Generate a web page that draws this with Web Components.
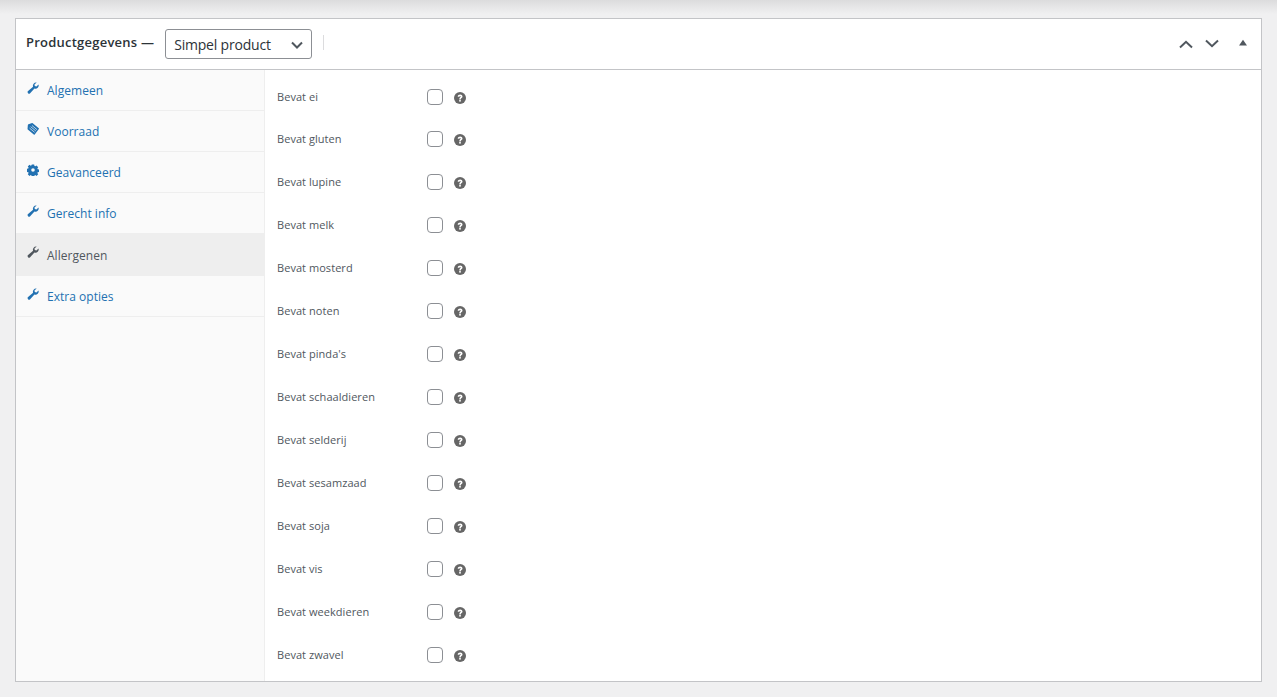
<!DOCTYPE html>
<html>
<head>
<meta charset="utf-8">
<title>Productgegevens</title>
<style>
html, body { margin: 0; height: 100%; }
body {
    background: #f0f0f1;
    font-family: "Open Sans", "Noto Sans", sans-serif;
    color: #3c434a;
    overflow: hidden;
}
</style>
</head>
<body>
<page-frame>
    <product-box title-text="Productgegevens —">
        <product-tab slot="tabs" icon="wrench">Algemeen</product-tab>
        <product-tab slot="tabs" icon="tag">Voorraad</product-tab>
        <product-tab slot="tabs" icon="gear">Geavanceerd</product-tab>
        <product-tab slot="tabs" icon="wrench">Gerecht info</product-tab>
        <product-tab slot="tabs" icon="wrench" active>Allergenen</product-tab>
        <product-tab slot="tabs" icon="wrench">Extra opties</product-tab>
        <check-row>Bevat ei</check-row>
        <check-row>Bevat gluten</check-row>
        <check-row>Bevat lupine</check-row>
        <check-row>Bevat melk</check-row>
        <check-row>Bevat mosterd</check-row>
        <check-row>Bevat noten</check-row>
        <check-row>Bevat pinda's</check-row>
        <check-row>Bevat schaaldieren</check-row>
        <check-row>Bevat selderij</check-row>
        <check-row>Bevat sesamzaad</check-row>
        <check-row>Bevat soja</check-row>
        <check-row>Bevat vis</check-row>
        <check-row>Bevat weekdieren</check-row>
        <check-row>Bevat zwavel</check-row>
    </product-box>
</page-frame>
<script>
const ICONS = {
    wrench: '<path d="M11.300.7a3.700 3.700 0 0 0-4.200 4.900L.9 10.800a1.900 1.900 0 0 0 2.500 2.600l5.300-5.900a3.700 3.700 0 0 0 4.700-4.700L11 5.200 9.100 4.700 8.700 3z"/>',
    tag: '<path d="M6.700.3 13.700 6a.8.8 0 0 1 .1 1.100L9 13.300a.8.8 0 0 1-1.100.1L.9 7.600a.8.8 0 0 1-.3-.7L1 2.200a.8.8 0 0 1 .7-.7L6 .1a.8.8 0 0 1 .7.2z"/><path d="M4.300 4.300 10.300 9.300M5.800 2.900 11.700 7.800M3 6 8.900 10.900" stroke="#fafafa" stroke-width=".8" fill="none"/>',
    gear: '<path fill-rule="evenodd" d="M5.600.6h2.800l.3 1.700 1 .4 1.400-1 2 2-1 1.400.4 1 1.700.3v2.800l-1.700.3-.4 1 1 1.400-2 2-1.400-1-1 .4-.3 1.700H5.600l-.3-1.700-1-.4-1.400 1-2-2 1-1.400-.4-1-1.700-.3V5.600l1.700-.3.4-1-1-1.400 2-2 1.400 1 1-.4zM7 4.900a2.100 2.100 0 1 0 0 4.200 2.100 2.100 0 0 0 0-4.200z"/>'
};

class PageFrame extends HTMLElement {
    constructor() {
        super();
        const root = this.attachShadow({mode: 'open'});
        root.innerHTML = `
        <style>
            :host {
                display: block;
                padding: 18px 15px 15px;
                background: linear-gradient(#dcdcdd, #f0f0f1 14px) no-repeat;
                box-sizing: border-box;
                height: 100%;
            }
        </style>
        <slot></slot>`;
    }
}

class ProductBox extends HTMLElement {
    constructor() {
        super();
        const root = this.attachShadow({mode: 'open'});
        root.innerHTML = `
        <style>
            :host {
                display: block;
                width: 1247px;
                height: 664px;
                box-sizing: border-box;
                background: #fff;
                border: 1px solid #c3c4c7;
            }
            header {
                display: flex;
                align-items: center;
                height: 51px;
                box-sizing: border-box;
                border-bottom: 1px solid #c3c4c7;
                padding-left: 10px;
            }
            h2 {
                margin: -4px 0 0;
                font-size: 13px;
                font-weight: 600;
                color: #2c3338;
                line-height: 20px;
                letter-spacing: .23px;
            }
            .select {
                display: flex;
                align-items: center;
                justify-content: space-between;
                box-sizing: border-box;
                width: 147px;
                height: 30px;
                margin-left: 11px;
                padding: 0 8px 0 8px;
                border: 1px solid #8c8f94;
                border-radius: 3px;
                font-size: 14px;
                color: #2c3338;
                letter-spacing: -.2px;
            }
            .select svg { margin-top: 1px; }
            .sep {
                width: 1px;
                height: 15px;
                margin: -3px 0 0 11px;
                background: #dcdcde;
            }
            .actions {
                margin-left: auto;
                display: flex;
                align-items: center;
                padding-right: 13px;
                margin-top: -1px;
            }
            .actions svg { display: block; }
            .body { display: flex; height: 611px; }
            nav {
                width: 249px;
                flex: none;
                box-sizing: border-box;
                background: #fafafa;
                border-right: 1px solid #eee;
            }
            main { flex: 1; padding-top: 5.600px; }
        </style>
        <header>
            <h2>${this.getAttribute('title-text')}</h2>
            <div class="select">Simpel product
                <svg width="12" height="8" viewBox="0 0 12 8"><path d="M1 1.500l5 5 5-5" fill="none" stroke="#50575e" stroke-width="2"/></svg>
            </div>
            <div class="sep"></div>
            <div class="actions">
                <svg width="16" height="10" viewBox="0 0 16 10" style="margin-right:10px"><path d="M2 8.500 8 2.800l6 5.700" fill="none" stroke="#50575e" stroke-width="2"/></svg>
                <svg width="16" height="10" viewBox="0 0 16 10" style="margin-right:18px"><path d="M2 1.500 8 7.200l6-5.700" fill="none" stroke="#50575e" stroke-width="2"/></svg>
                <svg width="10" height="8" viewBox="0 0 10 8" style="margin-top:-2px"><path d="M5 .8 9 6.500H1z" fill="#50575e"/></svg>
            </div>
        </header>
        <div class="body">
            <nav><slot name="tabs"></slot></nav>
            <main><slot></slot></main>
        </div>`;
    }
}

class ProductTab extends HTMLElement {
    constructor() {
        super();
        const root = this.attachShadow({mode: 'open'});
        const icon = ICONS[this.getAttribute('icon')];
        root.innerHTML = `
        <style>
            :host {
                display: flex;
                align-items: center;
                box-sizing: border-box;
                height: 41px;
                padding: 2px 0 0 11px;
                border-bottom: 1px solid #eee;
                color: #2271b1;
                font-size: 12px;
                line-height: 16px;
                letter-spacing: .03px;
            }
            :host([active]) {
                background: #eee;
                color: #50575e;
                height: 42px;
            }
            svg {
                width: 12px;
                height: 12px;
                margin: -7px 8px 0 0;
                fill: currentColor;
                flex: none;
            }
        </style>
        <svg viewBox="0 0 14 14">${icon}</svg><span><slot></slot></span>`;
    }
}

class CheckRow extends HTMLElement {
    constructor() {
        super();
        const root = this.attachShadow({mode: 'open'});
        root.innerHTML = `
        <style>
            :host {
                display: flex;
                align-items: center;
                box-sizing: border-box;
                height: 42.930px;
                padding-left: 12px;
                font-size: 11px;
                color: #50575e;
                letter-spacing: .05px;
            }
            label { width: 150px; flex: none; margin-top: -2px; }
            .box {
                width: 16px;
                height: 16px;
                box-sizing: border-box;
                border: 1px solid #8c8f94;
                border-radius: 4px;
                background: #fff;
                margin-top: -1px;
            }
            svg { width: 12px; height: 12px; margin: 1px 0 0 11px; }
        </style>
        <label><slot></slot></label>
        <div class="box"></div>
        <svg viewBox="0 0 12 12">
            <circle cx="6" cy="6" r="6" fill="#666"/>
            <path d="M3.700 4.700c0-3 4.800-3.100 4.800-.2 0 1.700-1.700 1.500-1.700 2.900H5.200c0-2.100 1.500-1.800 1.500-2.900 0-.9-1.300-.8-1.300.2z" fill="#fff"/>
            <rect x="5.200" y="8" width="1.600" height="1.600" fill="#fff"/>
        </svg>`;
    }
}

customElements.define('page-frame', PageFrame);
customElements.define('product-box', ProductBox);
customElements.define('product-tab', ProductTab);
customElements.define('check-row', CheckRow);
</script>
</body>
</html>
